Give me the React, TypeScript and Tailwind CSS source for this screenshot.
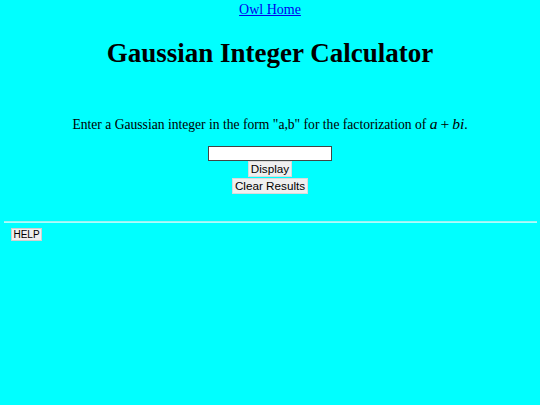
import React from "react";

export default function App() {
  return (
    <div className="w-full h-[405px] bg-[#00ffff] font-['Liberation_Serif',serif] text-black overflow-hidden">
      <div className="pt-[2px] text-center text-[14px] leading-[16px]">
        <a href="#" className="text-[#0000ee] underline">Owl Home</a>
      </div>
      <h1 className="mt-[20px] text-center text-[27px] leading-[31px] font-bold">
        Gaussian Integer Calculator
      </h1>
      <p className="mt-[47px] text-center text-[13.6px] leading-[16px] whitespace-nowrap">
        Enter a Gaussian integer in the form "a,b" for the factorization of{" "}
        <span className="italic text-[15.5px] leading-none">a</span>
        <span className="text-[15.5px] leading-none mx-[3px]">+</span>
        <span className="italic text-[15.5px] leading-none">bi</span>.
      </p>
      <div className="mt-[12.5px] flex flex-col items-center">
        <input
          type="text"
          className="w-[124px] h-[15px] bg-white border border-[#444] outline-none"
        />
        <button className="h-[16px] px-[2px] bg-[#efefef] border border-[#dadada] font-['Liberation_Sans',sans-serif] text-[11.7px] leading-[14px] text-black">
          Display
        </button>
        <button className="mt-[1px] h-[16px] px-[2px] bg-[#efefef] border border-[#dadada] font-['Liberation_Sans',sans-serif] text-[11.7px] leading-[14px] text-black">
          Clear Results
        </button>
      </div>
      <div className="mt-[27px] ml-[4px] mr-[3px] h-[2px] border-t border-[#a0f0f0] bg-[#a8ffff]" />
      <div className="mt-[5px] ml-[11px] flex">
        <button className="h-[13px] w-[31px] bg-[#efefef] border border-[#d0d0d0] font-['Liberation_Sans',sans-serif] text-[10px] leading-[11px] text-black">
          HELP
        </button>
      </div>
    </div>
  );
}
